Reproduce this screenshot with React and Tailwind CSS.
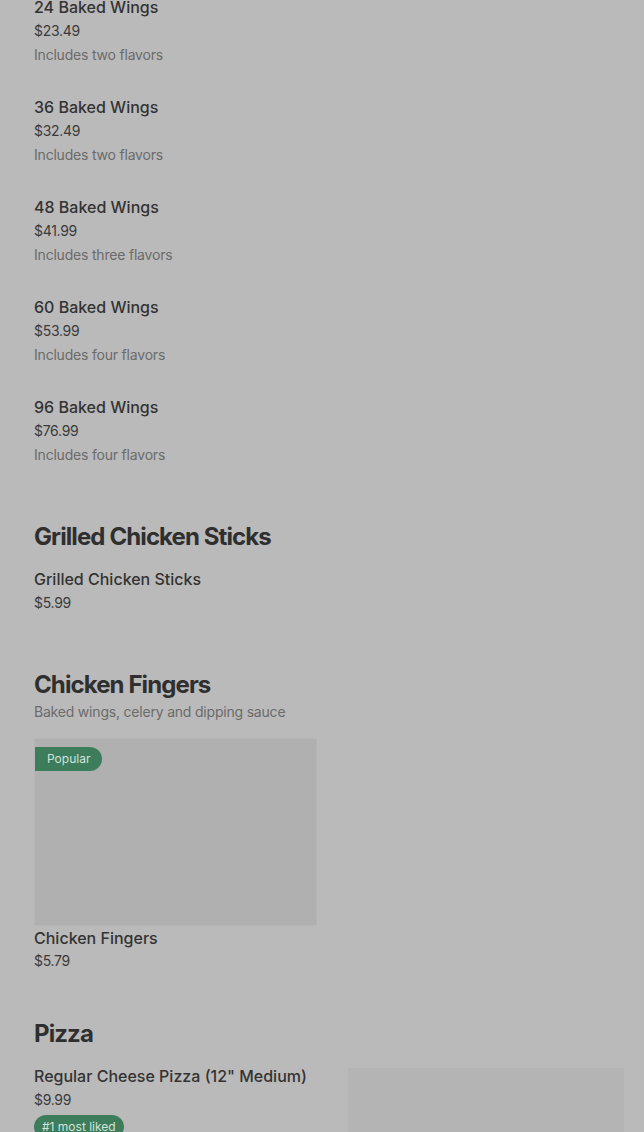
import React from 'react';

const wings = [
  { name: '24 Baked Wings', price: '$23.49', desc: 'Includes two flavors' },
  { name: '36 Baked Wings', price: '$32.49', desc: 'Includes two flavors' },
  { name: '48 Baked Wings', price: '$41.99', desc: 'Includes three flavors' },
  { name: '60 Baked Wings', price: '$53.99', desc: 'Includes four flavors' },
  { name: '96 Baked Wings', price: '$76.99', desc: 'Includes four flavors' },
];

const Item = ({ name, price, desc }) => (
  <div className="flex flex-col">
    <p className="text-[16px] leading-6 font-medium text-[#333333]">{name}</p>
    <p className="text-[14px] leading-6 tracking-[-0.3px] text-[#3a3a3a]">{price}</p>
    {desc && <p className="text-[14px] leading-6 tracking-[-0.2px] text-[#6b6b6b]">{desc}</p>}
  </div>
);

const SectionTitle = ({ children }) => (
  <h2 className="text-[24px] leading-8 font-bold tracking-[-0.9px] text-[#2f2f2f]">{children}</h2>
);

export default function App() {
  return (
    <div
      className="min-h-[1132px] bg-[#bababa] px-[34px] pb-10 -mt-[5px]"
      style={{ fontFamily: 'Inter, "Noto Sans", sans-serif' }}
    >
      <div className="flex flex-col gap-7">
        {wings.map((w) => (
          <Item key={w.name} {...w} />
        ))}
      </div>

      <section className="mt-[54px]">
        <SectionTitle>Grilled Chicken Sticks</SectionTitle>
        <div className="mt-[14px]">
          <Item name="Grilled Chicken Sticks" price="$5.99" />
        </div>
      </section>

      <section className="mt-[54px]">
        <SectionTitle>Chicken Fingers</SectionTitle>
        <p className="text-[14px] leading-[22px] tracking-[-0.2px] text-[#6b6b6b]">Baked wings, celery and dipping sauce</p>
        <div className="mt-[15px] grid grid-cols-2 gap-[10px]">
          <div className="flex flex-col">
            <div className="relative h-[188px] bg-[#b0b0b0] border border-[#b5b5b5]">
              <span className="absolute left-0 top-2 h-6 pl-3 pr-3 flex items-center rounded-r-full bg-[#3d7d5c] text-[12px] text-[#d3e3da]">
                Popular
              </span>
            </div>
            <p className="text-[16px] leading-6 font-medium text-[#333333]">Chicken Fingers</p>
            <p className="text-[14px] leading-[22px] tracking-[-0.3px] text-[#3a3a3a]">$5.79</p>
          </div>
        </div>
      </section>

      <section className="mt-[46px]">
        <SectionTitle>Pizza</SectionTitle>
        <div className="mt-[14px] flex gap-[30px]">
          <div className="flex-1 flex flex-col items-start">
            <p className="text-[16px] leading-6 font-medium text-[#333333]">Regular Cheese Pizza (12" Medium)</p>
            <p className="text-[14px] leading-6 tracking-[-0.3px] text-[#3a3a3a]">$9.99</p>
            <span className="mt-[3px] h-6 px-2 flex items-center rounded-full bg-[#3d7d5c] text-[12px] text-[#d3e3da]">
              #1 most liked
            </span>
          </div>
          <div className="mt-1 w-[276px] h-[160px] bg-[#b4b4b4] -mr-[14px]"></div>
        </div>
      </section>
    </div>
  );
}
